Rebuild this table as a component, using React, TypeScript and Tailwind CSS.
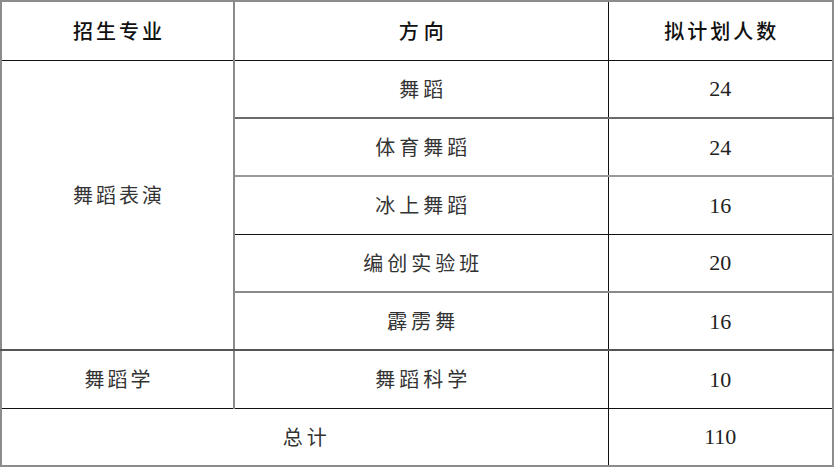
import React from "react";

const rows = [
  { dir: "舞蹈", num: "24", line: "border-b-2 border-b-[#6b6b6b]" },
  { dir: "体育舞蹈", num: "24", line: "border-b-2 border-b-[#9a9a9a]" },
  { dir: "冰上舞蹈", num: "16", line: "border-b border-b-[#111]" },
  { dir: "编创实验班", num: "20", line: "border-b-2 border-b-[#8a8a8a]" },
  { dir: "霹雳舞", num: "16", line: "border-b-2 border-b-[#555]" },
];

const cjk = "font-['Noto_Sans_CJK_SC','Noto_Sans',sans-serif]";
const num = "font-['Liberation_Serif',serif] text-[22px] text-[#222]";

const App = () => {
  return (
    <div className="w-[836px] h-[468px] bg-white">
      <table className="w-[834px] table-fixed border-collapse border-2 border-[#8c8c8c]">
        <colgroup>
          <col className="w-[233px]" />
          <col className="w-[374px]" />
          <col />
        </colgroup>
        <thead>
          <tr className={`h-[59px] text-[20px] font-medium text-[#111] tracking-[3px] ${cjk}`}>
            <th className="border-b border-b-[#111] border-r-2 border-r-[#8a8a8a] pl-[3px] font-medium">
              招生专业
            </th>
            <th className="border-b border-b-[#111] border-r border-r-[#111] pl-[5px] font-medium tracking-[5px]">
              方向
            </th>
            <th className="border-b border-b-[#111] pl-[3px] font-medium">拟计划人数</th>
          </tr>
        </thead>
        <tbody>
          {rows.map((r, idx) => (
            <tr key={idx} className="h-[58px]">
              {idx === 0 && (
                <td
                  rowSpan={5}
                  className={`border-b-2 border-b-[#555] border-r-2 border-r-[#8a8a8a] text-center text-[20px] text-[#333] tracking-[3px] pl-[3px] pb-[20px] ${cjk}`}
                >
                  舞蹈表演
                </td>
              )}
              <td
                className={`${r.line} border-r border-r-[#111] text-center text-[20px] text-[#333] tracking-[4px] pl-[4px] ${cjk}`}
              >
                {r.dir}
              </td>
              <td className={`${r.line} text-center ${num}`}>{r.num}</td>
            </tr>
          ))}
          <tr className="h-[58px]">
            <td
              className={`border-b border-b-[#111] border-r-2 border-r-[#8a8a8a] text-center text-[20px] text-[#333] tracking-[3px] pl-[3px] ${cjk}`}
            >
              舞蹈学
            </td>
            <td
              className={`border-b border-b-[#111] border-r border-r-[#111] text-center text-[20px] text-[#333] tracking-[4px] pl-[4px] ${cjk}`}
            >
              舞蹈科学
            </td>
            <td className={`border-b border-b-[#111] text-center ${num}`}>10</td>
          </tr>
          <tr className="h-[58px]">
            <td
              colSpan={2}
              className={`border-r border-r-[#111] text-center text-[20px] text-[#333] tracking-[4px] pl-[4px] ${cjk}`}
            >
              总计
            </td>
            <td className={`text-center ${num}`}>110</td>
          </tr>
        </tbody>
      </table>
    </div>
  );
};

export default App;
